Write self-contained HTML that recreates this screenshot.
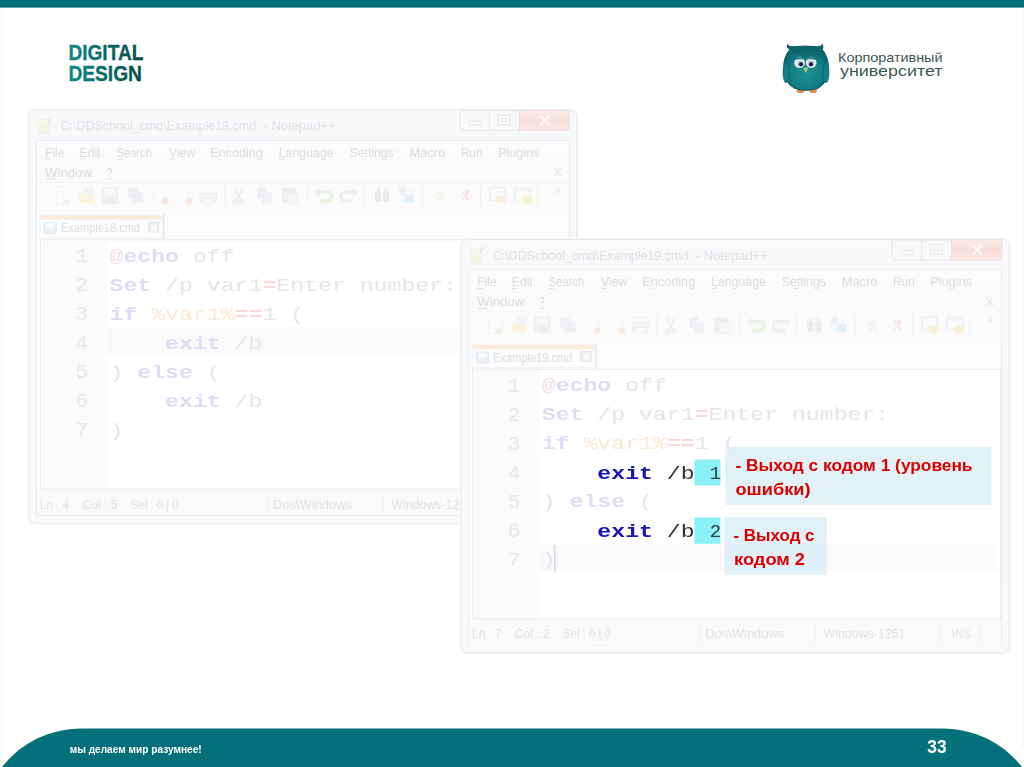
<!DOCTYPE html>
<html lang="ru"><head><meta charset="utf-8"><title>Slide 33</title>
<style>
html,body{margin:0;padding:0;background:#fff;}
body{width:1024px;height:767px;position:relative;overflow:hidden;font-family:"Liberation Sans",sans-serif;}
</style></head><body>
<svg width="1024" height="767" viewBox="0 0 1024 767" style="position:absolute;left:0;top:0">
<defs>
<linearGradient id="frameA" x1="0" y1="0" x2="0" y2="1"><stop offset="0" stop-color="#f5f8fb"/><stop offset="1" stop-color="#f7f9fc"/></linearGradient>
<linearGradient id="frameB" x1="0" y1="0" x2="0" y2="1"><stop offset="0" stop-color="#f5f8fb"/><stop offset="1" stop-color="#f7f9fc"/></linearGradient>
<linearGradient id="menug" x1="0" y1="0" x2="0" y2="1"><stop offset="0" stop-color="#fcfdfe"/><stop offset="0.5" stop-color="#f7f9fb"/><stop offset="1" stop-color="#f8fafc"/></linearGradient>
<linearGradient id="closeg" x1="0" y1="0" x2="0" y2="1"><stop offset="0" stop-color="#f9e8e5"/><stop offset="0.5" stop-color="#f5d8d3"/><stop offset="1" stop-color="#f8e2dd"/></linearGradient>
<linearGradient id="ddg" x1="0" y1="0" x2="1" y2="0"><stop offset="0" stop-color="#0a8a88"/><stop offset="1" stop-color="#084a48"/></linearGradient>
<filter id="soft" x="-2%" y="-2%" width="104%" height="104%"><feGaussianBlur stdDeviation="0.45"/></filter>
<radialGradient id="owlg" cx="0.5" cy="0.6" r="0.6"><stop offset="0" stop-color="#1b908f"/><stop offset="0.55" stop-color="#138088"/><stop offset="1" stop-color="#0b5f68"/></radialGradient>
</defs>
<rect x="0" y="0" width="1024" height="7.6" fill="#046f76"/>
<line x1="1.5" y1="8" x2="1.5" y2="767" stroke="#f6f6f6" stroke-width="1"/>
<rect x="1021.5" y="8" width="2.5" height="740" fill="#f9f9f9"/>
<text x="68.40" y="60.30" font-family="Liberation Sans, sans-serif" font-size="22.60" fill="url(#ddg)" textLength="75.00" lengthAdjust="spacingAndGlyphs" font-weight="bold" stroke="url(#ddg)" stroke-width="0.35">DIGITAL</text>
<text x="68.40" y="80.80" font-family="Liberation Sans, sans-serif" font-size="22.20" fill="url(#ddg)" textLength="73.50" lengthAdjust="spacingAndGlyphs" font-weight="bold" stroke="url(#ddg)" stroke-width="0.35">DESIGN</text>
<g transform="translate(0,0.8)">
<ellipse cx="800.5" cy="89.6" rx="3.8" ry="2.6" fill="#e58a45"/><ellipse cx="813.2" cy="89.600" rx="3.8" ry="2.6" fill="#e58a45"/>
<path d="M787.5 43.6 Q789 46.2 792.5 46 Q805 44.6 817.5 46 Q821 46.2 822.3 43.6 Q823.6 46.800 822.3 48.6 Q829.2 57 828.3 70 Q827.5 82 818 87.500 Q806 91.500 794.500 87.500 Q784.500 82 783.700 70 Q782.800 57 789.700 48.6 Q786.400 46.800 787.5 43.6 Z" fill="url(#owlg)" stroke="#0b5660" stroke-width="1"/>
<path d="M789.5 48.5 Q805 43.500 822.5 48.5 Q818 54 806 57 Q794 54 789.5 48.5Z" fill="#0d646b" fill-opacity="0.75"/>
<ellipse cx="786" cy="72" rx="3" ry="10" fill="#128084" stroke="#0c6068" stroke-width="0.6"/>
<ellipse cx="826" cy="72" rx="3" ry="10" fill="#128084" stroke="#0c6068" stroke-width="0.6"/>
<circle cx="799.6" cy="62" r="5.3" fill="#e9edf4"/><circle cx="811.2" cy="62" r="5.3" fill="#e9edf4"/>
<circle cx="800.6" cy="63" r="3.2" fill="#b9c3dc"/><circle cx="811" cy="63" r="3.2" fill="#b9c3dc"/>
<circle cx="801" cy="63.4" r="2" fill="#15153a"/><circle cx="811" cy="63.4" r="2" fill="#15153a"/>
<path d="M793.8 59.800 Q799 54.300 805.300 59.500 Q799 56.600 793.8 59.800Z" fill="#0e666c"/>
<path d="M817 59.800 Q811.800 54.300 805.5 59.500 Q811.800 56.600 817 59.800Z" fill="#0e666c"/>
<path d="M803.3 67.300 Q805.800 66 808.300 67.300 L805.800 72.5z" fill="#a9cf6a"/>
</g>
<text x="838.00" y="62.30" font-family="Liberation Sans, sans-serif" font-size="12.40" fill="#3a5654" textLength="104.50" lengthAdjust="spacingAndGlyphs" >Корпоративный</text>
<text x="840.00" y="76.00" font-family="Liberation Sans, sans-serif" font-size="14.60" fill="#3a5654" textLength="102.50" lengthAdjust="spacingAndGlyphs" >университет</text>
<g filter="url(#soft)" opacity="0.8">
<g transform="translate(0.00,0.00)">
<rect x="28.5" y="109" width="549" height="415" rx="7" fill="none" stroke="#f4f5f6" stroke-width="1.5"/>
<rect x="29.5" y="110" width="547" height="413" rx="6" fill="url(#frameA)" stroke="#e1e5e9" stroke-width="1"/>
<rect x="30.5" y="111" width="545" height="411" rx="5" fill="none" stroke="#fbfcfd" stroke-width="1"/>
<rect x="36.5" y="140.5" width="533" height="375" fill="#ffffff" stroke="#e3e7eb" stroke-width="1"/>
<g><rect x="38" y="119.5" width="11.5" height="14" fill="#f6f6e8" stroke="#e9e9e0" stroke-width="0.8"/><rect x="39.5" y="126" width="8.5" height="6.5" fill="#f0f4d8"/><path d="M47 123 L51.3 116.8 L52.300 117.800 L48 124 Z" fill="#e6e3d6"/></g>
<text x="60.60" y="130.40" font-family="Liberation Sans, sans-serif" font-size="13.20" fill="#d7dadd" textLength="195.50" lengthAdjust="spacingAndGlyphs" >C:\DDSchool_cmd\Example18.cmd</text>
<text x="263.50" y="130.40" font-family="Liberation Sans, sans-serif" font-size="13.20" fill="#d7dadd" textLength="72.00" lengthAdjust="spacingAndGlyphs" >- Notepad++</text>
<path d="M460 110.5 H569.5 V126 Q569.5 130.5 565 130.5 H464.5 Q460 130.5 460 126 Z" fill="#f6f8fa" stroke="#dfe3e7" stroke-width="1"/>
<path d="M519.5 110.5 H569.5 V126 Q569.5 130.5 565 130.5 H519.5 Z" fill="url(#closeg)" stroke="#ecd6d3" stroke-width="1"/>
<line x1="489.5" y1="110.5" x2="489.5" y2="130.5" stroke="#e1e5e9"/>
<rect x="469" y="121" width="12" height="4" rx="1" fill="#fdfdfd" stroke="#dcdfe3" stroke-width="1"/>
<rect x="498.5" y="115.5" width="11" height="9" fill="#fdfdfd" stroke="#dcdfe3" stroke-width="1"/><rect x="501.5" y="118.500" width="5" height="3" fill="none" stroke="#dcdfe3" stroke-width="1"/>
<path d="M540.5 116 L549.5 125 M549.5 116 L540.5 125" stroke="#fdf8f7" stroke-width="2.2" stroke-linecap="round"/>
<rect x="37" y="141" width="532" height="41" fill="url(#menug)"/>
<line x1="37" y1="182.5" x2="569" y2="182.5" stroke="#eef0f3"/>
<text x="45.00" y="156.70" font-family="Liberation Sans, sans-serif" font-size="12.60" fill="#d1d4d7" textLength="19.50" lengthAdjust="spacingAndGlyphs" >File</text>
<line x1="45.00" y1="158.9" x2="51.00" y2="158.9" stroke="#d6d9dc" stroke-width="1"/>
<text x="79.50" y="156.70" font-family="Liberation Sans, sans-serif" font-size="12.60" fill="#d1d4d7" textLength="21.00" lengthAdjust="spacingAndGlyphs" >Edit</text>
<line x1="79.50" y1="158.9" x2="85.50" y2="158.9" stroke="#d6d9dc" stroke-width="1"/>
<text x="116.25" y="156.70" font-family="Liberation Sans, sans-serif" font-size="12.60" fill="#d1d4d7" textLength="35.75" lengthAdjust="spacingAndGlyphs" >Search</text>
<line x1="116.25" y1="158.9" x2="122.25" y2="158.9" stroke="#d6d9dc" stroke-width="1"/>
<text x="168.75" y="156.70" font-family="Liberation Sans, sans-serif" font-size="12.60" fill="#d1d4d7" textLength="26.25" lengthAdjust="spacingAndGlyphs" >View</text>
<line x1="168.75" y1="158.9" x2="174.75" y2="158.9" stroke="#d6d9dc" stroke-width="1"/>
<text x="210.00" y="156.70" font-family="Liberation Sans, sans-serif" font-size="12.60" fill="#d1d4d7" textLength="53.00" lengthAdjust="spacingAndGlyphs" >Encoding</text>
<line x1="216.50" y1="158.9" x2="222.50" y2="158.9" stroke="#e6e8ea" stroke-width="1"/>
<text x="278.75" y="156.70" font-family="Liberation Sans, sans-serif" font-size="12.60" fill="#d1d4d7" textLength="55.00" lengthAdjust="spacingAndGlyphs" >Language</text>
<line x1="278.75" y1="158.9" x2="284.75" y2="158.9" stroke="#d6d9dc" stroke-width="1"/>
<text x="349.50" y="156.70" font-family="Liberation Sans, sans-serif" font-size="12.60" fill="#d1d4d7" textLength="44.25" lengthAdjust="spacingAndGlyphs" >Settings</text>
<line x1="362.00" y1="158.9" x2="366.00" y2="158.9" stroke="#d6d9dc" stroke-width="1"/>
<text x="409.50" y="156.70" font-family="Liberation Sans, sans-serif" font-size="12.60" fill="#d1d4d7" textLength="35.50" lengthAdjust="spacingAndGlyphs" >Macro</text>
<text x="460.75" y="156.70" font-family="Liberation Sans, sans-serif" font-size="12.60" fill="#d1d4d7" textLength="21.75" lengthAdjust="spacingAndGlyphs" >Run</text>
<text x="498.00" y="156.70" font-family="Liberation Sans, sans-serif" font-size="12.60" fill="#d1d4d7" textLength="41.50" lengthAdjust="spacingAndGlyphs" >Plugins</text>
<text x="45.00" y="176.80" font-family="Liberation Sans, sans-serif" font-size="12.60" fill="#d1d4d7" textLength="47.00" lengthAdjust="spacingAndGlyphs" >Window</text>
<line x1="45.00" y1="179" x2="56.00" y2="179" stroke="#d6dade" stroke-width="1"/>
<text x="107.00" y="176.80" font-family="Liberation Sans, sans-serif" font-size="12.60" fill="#d1d4d7" textLength="5.50" lengthAdjust="spacingAndGlyphs" >?</text>
<line x1="107.00" y1="179" x2="112.50" y2="179" stroke="#d6dade" stroke-width="1"/>
<text x="553.50" y="176.30" font-family="Liberation Sans, sans-serif" font-size="11.50" fill="#d9dde1" textLength="8.00" lengthAdjust="spacingAndGlyphs" >X</text>
<rect x="37" y="183" width="532" height="29" fill="#fafbfc"/>
<g opacity="0.72"><path d="M56 187 h9 l4 4 v13 h-13z" fill="#fdfdfd" stroke="#eceef0"/><circle cx="66" cy="202" r="3" fill="#e4efd6"/>
<path d="M79 193 h6 l2 -2 h7 v12 h-15z" fill="#fbf0c8"/><path d="M84 188 h9 v6 h-9z" fill="#eef2f8" stroke="#e4e9f1"/>
<rect x="102.5" y="187.500" width="15.5" height="16" rx="1" fill="#e9ecf1" stroke="#e2e5ea"/><rect x="105" y="188" width="10" height="6" fill="#f8f9fb"/><rect x="105.5" y="197" width="9" height="6" fill="#dfe2e8"/>
<rect x="128" y="188" width="10" height="10" fill="#e6e9ee"/><rect x="132" y="192" width="11" height="11" fill="#e4e7ec" stroke="#eef0f3"/>
<path d="M154 187.500 h8 l4 4 v12 h-12z" fill="#fcfcfc" stroke="#eeeff1"/><circle cx="165" cy="201" r="3.3" fill="#f8dcc8"/>
<path d="M179 187.500 h7 l3 3 v10 h-10z" fill="#fcfcfc" stroke="#eeeff1"/><circle cx="189.5" cy="201" r="3.300" fill="#f8dcc8"/>
<rect x="203" y="188" width="10" height="6" fill="#fcfcfc" stroke="#e6e8ec"/><rect x="200" y="193.500" width="16.5" height="8" rx="1.500" fill="#eef0f3" stroke="#e3e6ea"/><rect x="203" y="198" width="10.5" height="5.500" fill="#fafafa" stroke="#e6e8ec"/>
<line x1="225.0" y1="186" x2="225.0" y2="205" stroke="#e9ebee" stroke-width="1.2"/>
<line x1="307.0" y1="186" x2="307.0" y2="205" stroke="#e9ebee" stroke-width="1.2"/>
<line x1="364.5" y1="186" x2="364.5" y2="205" stroke="#e9ebee" stroke-width="1.2"/>
<line x1="422.5" y1="186" x2="422.5" y2="205" stroke="#e9ebee" stroke-width="1.2"/>
<line x1="480.5" y1="186" x2="480.5" y2="205" stroke="#e9ebee" stroke-width="1.2"/>
<line x1="537.7" y1="186" x2="537.7" y2="205" stroke="#e9ebee" stroke-width="1.2"/>
<path d="M234 188 L241 201 M243 188 L236 201" stroke="#e3e5e9" stroke-width="2" fill="none"/><circle cx="235.5" cy="202" r="2.200" fill="none" stroke="#dfe5f0" stroke-width="1.5"/><circle cx="242" cy="202" r="2.200" fill="none" stroke="#dfe5f0" stroke-width="1.5"/>
<rect x="257" y="187.500" width="9" height="11" fill="#e6e9ee"/><rect x="262" y="192" width="10" height="11.5" fill="#e8ebf0" stroke="#f2f3f5"/>
<rect x="282" y="188" width="14" height="15" rx="1" fill="#e9e6de"/><rect x="288" y="193" width="10" height="11" fill="#f3f4f6" stroke="#e6e8ec"/>
<path d="M318 192 h9 q5 0 5 4.5 t-5 4.5 h-7" fill="none" stroke="#dbecd2" stroke-width="3.5"/><path d="M320 188 l-5.500 4.500 l5.500 4.500z" fill="#dbecd2"/>
<path d="M355 192 h-9 q-5 0 -5 4.5 t5 4.5 h7" fill="none" stroke="#e6e8ec" stroke-width="3.5"/><path d="M353 188 l5.500 4.500 l-5.500 4.500z" fill="#e6e8ec"/>
<rect x="375" y="192" width="6" height="10" rx="1" fill="#dcdee2"/><rect x="383" y="192" width="6" height="10" rx="1" fill="#dcdee2"/><rect x="377" y="188.500" width="3" height="4" fill="#e3e5e8"/><rect x="384.500" y="188.500" width="3" height="4" fill="#e3e5e8"/><rect x="380" y="194" width="4" height="3" fill="#e3e5e8"/>
<rect x="399" y="187.500" width="7" height="8" fill="#dfeaf6"/><rect x="405" y="194.500" width="9" height="8.500" fill="#d6e6f5"/><path d="M401 198 l3 3 M409 190 l3 3" stroke="#d9e8f5" stroke-width="1.500"/>
<path d="M436 192 l6 5 l-5 4" stroke="#e1efd8" stroke-width="2" fill="none"/><circle cx="442" cy="193" r="2" fill="#e4f0dc"/><circle cx="443" cy="200" r="2" fill="#e8f2e0"/><line x1="431" y1="196" x2="438" y2="196" stroke="#ececec"/>
<path d="M461 191 l6 5 l-5 4" stroke="#f7dada" stroke-width="2" fill="none"/><circle cx="467" cy="192" r="2.200" fill="#f6d2d2"/><circle cx="468" cy="199" r="2" fill="#f8dede"/><line x1="456" y1="196" x2="463" y2="196" stroke="#ececec"/>
<rect x="490" y="187.500" width="15" height="13" fill="#fbfbfc" stroke="#e3e6eb" stroke-width="1.300"/><rect x="497" y="196" width="9" height="7.500" rx="1" fill="#fbeac0"/>
<rect x="514.500" y="188" width="16" height="12" fill="#fbfbfc" stroke="#e3e6eb" stroke-width="1.300"/><rect x="515" y="188" width="15" height="3" fill="#eceff3"/><rect x="522" y="196" width="10" height="7.500" rx="1" fill="#fbeac0"/>
</g>
<text x="555.00" y="193.50" font-family="Liberation Sans, sans-serif" font-size="11.00" fill="#dde1e6" >»</text>
<rect x="37" y="212" width="532" height="27.5" fill="#fcfcfc"/>
<rect x="40" y="215.2" width="122" height="4.2" fill="#fde7d4"/>
<rect x="40" y="219.4" width="123" height="18.500" fill="#fdfdfd" stroke="#efefef" stroke-width="1"/>
<line x1="163.7" y1="214" x2="163.700" y2="239" stroke="#e0e0e0" stroke-width="1.3"/>
<rect x="44" y="222.5" width="12.5" height="11" rx="1" fill="#e6f0f9" stroke="#dbe7f3"/><rect x="46" y="223.5" width="8.5" height="4" fill="#fbfdff"/>
<text x="61.00" y="232.00" font-family="Liberation Sans, sans-serif" font-size="12.50" fill="#d6d6d6" textLength="79.00" lengthAdjust="spacingAndGlyphs" >Example18.cmd</text>
<rect x="148.5" y="222" width="10.5" height="10" fill="#e9e9e9" stroke="#e3e3e3"/><path d="M151 225 L156.5 230.500 M156.5 225 L151 230.500" stroke="#fff" stroke-width="1.6"/>
<rect x="40.5" y="239.75" width="528" height="249.5" fill="#ffffff" stroke="#e6e8ea" stroke-width="1.2"/>
<rect x="42" y="241" width="63" height="247.5" fill="#fafafa"/>
<rect x="103" y="241" width="4.5" height="247.5" fill="#fcfcfc"/>
<rect x="107.5" y="326.90" width="457" height="27.5" fill="#f9f9fd"/>
<text x="75.30" y="262.20" font-family="Liberation Mono, monospace" font-size="20.80" fill="#e3e3e3" textLength="13.00" lengthAdjust="spacingAndGlyphs" >1</text>
<text x="75.30" y="291.20" font-family="Liberation Mono, monospace" font-size="20.80" fill="#e3e3e3" textLength="13.00" lengthAdjust="spacingAndGlyphs" >2</text>
<text x="75.30" y="320.20" font-family="Liberation Mono, monospace" font-size="20.80" fill="#e3e3e3" textLength="13.00" lengthAdjust="spacingAndGlyphs" >3</text>
<text x="75.30" y="349.20" font-family="Liberation Mono, monospace" font-size="20.80" fill="#e3e3e3" textLength="13.00" lengthAdjust="spacingAndGlyphs" >4</text>
<text x="75.30" y="378.20" font-family="Liberation Mono, monospace" font-size="20.80" fill="#e3e3e3" textLength="13.00" lengthAdjust="spacingAndGlyphs" >5</text>
<text x="75.30" y="407.20" font-family="Liberation Mono, monospace" font-size="20.80" fill="#e3e3e3" textLength="13.00" lengthAdjust="spacingAndGlyphs" >6</text>
<text x="75.30" y="436.20" font-family="Liberation Mono, monospace" font-size="20.80" fill="#e3e3e3" textLength="13.00" lengthAdjust="spacingAndGlyphs" >7</text>
</g>
<text x="109.50" y="261.90" font-family="Liberation Mono, monospace" font-size="18.60" fill="#f3d7e5" textLength="13.90" lengthAdjust="spacingAndGlyphs" >@</text>
<text x="123.40" y="261.90" font-family="Liberation Mono, monospace" font-size="18.60" fill="#d5d6f2" textLength="55.60" lengthAdjust="spacingAndGlyphs" font-weight="bold" >echo</text>
<text x="192.90" y="261.90" font-family="Liberation Mono, monospace" font-size="18.60" fill="#e0e0e0" textLength="41.70" lengthAdjust="spacingAndGlyphs" >off</text>
<text x="109.50" y="290.90" font-family="Liberation Mono, monospace" font-size="18.60" fill="#d5d6f2" textLength="41.70" lengthAdjust="spacingAndGlyphs" font-weight="bold" >Set</text>
<text x="165.10" y="290.90" font-family="Liberation Mono, monospace" font-size="18.60" fill="#e0e0e0" textLength="97.30" lengthAdjust="spacingAndGlyphs" >/p var1</text>
<text x="262.40" y="290.90" font-family="Liberation Mono, monospace" font-size="18.60" fill="#f9cfcf" textLength="13.90" lengthAdjust="spacingAndGlyphs" font-weight="bold" >=</text>
<text x="276.30" y="290.90" font-family="Liberation Mono, monospace" font-size="18.60" fill="#e0e0e0" textLength="180.70" lengthAdjust="spacingAndGlyphs" >Enter number:</text>
<text x="109.50" y="319.90" font-family="Liberation Mono, monospace" font-size="18.60" fill="#d5d6f2" textLength="27.80" lengthAdjust="spacingAndGlyphs" font-weight="bold" >if</text>
<text x="151.20" y="319.90" font-family="Liberation Mono, monospace" font-size="18.60" fill="#fae4cd" textLength="83.40" lengthAdjust="spacingAndGlyphs" >%var1%</text>
<text x="234.60" y="319.90" font-family="Liberation Mono, monospace" font-size="18.60" fill="#f9cfcf" textLength="27.80" lengthAdjust="spacingAndGlyphs" font-weight="bold" >==</text>
<text x="262.40" y="319.90" font-family="Liberation Mono, monospace" font-size="18.60" fill="#e0e0e0" textLength="13.90" lengthAdjust="spacingAndGlyphs" >1</text>
<text x="290.20" y="319.90" font-family="Liberation Mono, monospace" font-size="18.60" fill="#dcdff6" textLength="13.90" lengthAdjust="spacingAndGlyphs" >(</text>
<text x="165.10" y="348.90" font-family="Liberation Mono, monospace" font-size="18.60" fill="#d5d6f2" textLength="55.60" lengthAdjust="spacingAndGlyphs" font-weight="bold" >exit</text>
<text x="234.60" y="348.90" font-family="Liberation Mono, monospace" font-size="18.60" fill="#e0e0e0" textLength="27.80" lengthAdjust="spacingAndGlyphs" >/b</text>
<text x="109.50" y="377.90" font-family="Liberation Mono, monospace" font-size="18.60" fill="#dcdff6" textLength="13.90" lengthAdjust="spacingAndGlyphs" >)</text>
<text x="137.30" y="377.90" font-family="Liberation Mono, monospace" font-size="18.60" fill="#d5d6f2" textLength="55.60" lengthAdjust="spacingAndGlyphs" font-weight="bold" >else</text>
<text x="206.80" y="377.90" font-family="Liberation Mono, monospace" font-size="18.60" fill="#dcdff6" textLength="13.90" lengthAdjust="spacingAndGlyphs" >(</text>
<text x="165.10" y="406.90" font-family="Liberation Mono, monospace" font-size="18.60" fill="#d5d6f2" textLength="55.60" lengthAdjust="spacingAndGlyphs" font-weight="bold" >exit</text>
<text x="234.60" y="406.90" font-family="Liberation Mono, monospace" font-size="18.60" fill="#e0e0e0" textLength="27.80" lengthAdjust="spacingAndGlyphs" >/b</text>
<text x="109.50" y="435.90" font-family="Liberation Mono, monospace" font-size="18.60" fill="#dcdff6" textLength="13.90" lengthAdjust="spacingAndGlyphs" >)</text>
<g transform="translate(0.00,0.00)">
<rect x="37" y="490" width="532" height="25" fill="#f9f9fa"/>
<line x1="267.5" y1="492" x2="267.5" y2="514" stroke="#f0f0f1"/>
<line x1="383.5" y1="492" x2="383.5" y2="514" stroke="#f0f0f1"/>
<line x1="508.0" y1="492" x2="508.0" y2="514" stroke="#f0f0f1"/>
<line x1="548.0" y1="492" x2="548.0" y2="514" stroke="#f0f0f1"/>
<text x="40.00" y="508.70" font-family="Liberation Sans, sans-serif" font-size="12.60" fill="#dadbdc" textLength="29.00" lengthAdjust="spacingAndGlyphs" >Ln : 4</text>
<text x="82.50" y="508.70" font-family="Liberation Sans, sans-serif" font-size="12.60" fill="#dadbdc" textLength="35.00" lengthAdjust="spacingAndGlyphs" >Col : 5</text>
<text x="130.70" y="508.70" font-family="Liberation Sans, sans-serif" font-size="12.60" fill="#dadbdc" textLength="48.00" lengthAdjust="spacingAndGlyphs" >Sel : 0 | 0</text>
<text x="273.00" y="508.70" font-family="Liberation Sans, sans-serif" font-size="12.60" fill="#dadbdc" textLength="79.00" lengthAdjust="spacingAndGlyphs" >Dos\Windows</text>
<text x="391.25" y="508.70" font-family="Liberation Sans, sans-serif" font-size="12.60" fill="#dadbdc" textLength="82.00" lengthAdjust="spacingAndGlyphs" >Windows-1251</text>
<text x="519.50" y="508.70" font-family="Liberation Sans, sans-serif" font-size="12.60" fill="#dedfe0" textLength="19.00" lengthAdjust="spacingAndGlyphs" >INS</text>
</g>
<g transform="translate(432.25,129.50)">
<rect x="28.5" y="109" width="549" height="415" rx="7" fill="none" stroke="#f4f5f6" stroke-width="1.5"/>
<rect x="29.5" y="110" width="547" height="413" rx="6" fill="url(#frameB)" stroke="#e1e5e9" stroke-width="1"/>
<rect x="30.5" y="111" width="545" height="411" rx="5" fill="none" stroke="#fbfcfd" stroke-width="1"/>
<rect x="36.5" y="140.5" width="533" height="375" fill="#ffffff" stroke="#e3e7eb" stroke-width="1"/>
<g><rect x="38" y="119.5" width="11.5" height="14" fill="#f6f6e8" stroke="#e9e9e0" stroke-width="0.8"/><rect x="39.5" y="126" width="8.5" height="6.5" fill="#f0f4d8"/><path d="M47 123 L51.3 116.8 L52.300 117.800 L48 124 Z" fill="#e6e3d6"/></g>
<text x="60.60" y="130.40" font-family="Liberation Sans, sans-serif" font-size="13.20" fill="#d7dadd" textLength="195.50" lengthAdjust="spacingAndGlyphs" >C:\DDSchool_cmd\Example19.cmd</text>
<text x="263.50" y="130.40" font-family="Liberation Sans, sans-serif" font-size="13.20" fill="#d7dadd" textLength="72.00" lengthAdjust="spacingAndGlyphs" >- Notepad++</text>
<path d="M460 110.5 H569.5 V126 Q569.5 130.5 565 130.5 H464.5 Q460 130.5 460 126 Z" fill="#f6f8fa" stroke="#dfe3e7" stroke-width="1"/>
<path d="M519.5 110.5 H569.5 V126 Q569.5 130.5 565 130.5 H519.5 Z" fill="url(#closeg)" stroke="#ecd6d3" stroke-width="1"/>
<line x1="489.5" y1="110.5" x2="489.5" y2="130.5" stroke="#e1e5e9"/>
<rect x="469" y="121" width="12" height="4" rx="1" fill="#fdfdfd" stroke="#dcdfe3" stroke-width="1"/>
<rect x="498.5" y="115.5" width="11" height="9" fill="#fdfdfd" stroke="#dcdfe3" stroke-width="1"/><rect x="501.5" y="118.500" width="5" height="3" fill="none" stroke="#dcdfe3" stroke-width="1"/>
<path d="M540.5 116 L549.5 125 M549.5 116 L540.5 125" stroke="#fdf8f7" stroke-width="2.2" stroke-linecap="round"/>
<rect x="37" y="141" width="532" height="41" fill="url(#menug)"/>
<line x1="37" y1="182.5" x2="569" y2="182.5" stroke="#eef0f3"/>
<text x="45.00" y="156.70" font-family="Liberation Sans, sans-serif" font-size="12.60" fill="#d1d4d7" textLength="19.50" lengthAdjust="spacingAndGlyphs" >File</text>
<line x1="45.00" y1="158.9" x2="51.00" y2="158.9" stroke="#d6d9dc" stroke-width="1"/>
<text x="79.50" y="156.70" font-family="Liberation Sans, sans-serif" font-size="12.60" fill="#d1d4d7" textLength="21.00" lengthAdjust="spacingAndGlyphs" >Edit</text>
<line x1="79.50" y1="158.9" x2="85.50" y2="158.9" stroke="#d6d9dc" stroke-width="1"/>
<text x="116.25" y="156.70" font-family="Liberation Sans, sans-serif" font-size="12.60" fill="#d1d4d7" textLength="35.75" lengthAdjust="spacingAndGlyphs" >Search</text>
<line x1="116.25" y1="158.9" x2="122.25" y2="158.9" stroke="#d6d9dc" stroke-width="1"/>
<text x="168.75" y="156.70" font-family="Liberation Sans, sans-serif" font-size="12.60" fill="#d1d4d7" textLength="26.25" lengthAdjust="spacingAndGlyphs" >View</text>
<line x1="168.75" y1="158.9" x2="174.75" y2="158.9" stroke="#d6d9dc" stroke-width="1"/>
<text x="210.00" y="156.70" font-family="Liberation Sans, sans-serif" font-size="12.60" fill="#d1d4d7" textLength="53.00" lengthAdjust="spacingAndGlyphs" >Encoding</text>
<line x1="216.50" y1="158.9" x2="222.50" y2="158.9" stroke="#e6e8ea" stroke-width="1"/>
<text x="278.75" y="156.70" font-family="Liberation Sans, sans-serif" font-size="12.60" fill="#d1d4d7" textLength="55.00" lengthAdjust="spacingAndGlyphs" >Language</text>
<line x1="278.75" y1="158.9" x2="284.75" y2="158.9" stroke="#d6d9dc" stroke-width="1"/>
<text x="349.50" y="156.70" font-family="Liberation Sans, sans-serif" font-size="12.60" fill="#d1d4d7" textLength="44.25" lengthAdjust="spacingAndGlyphs" >Settings</text>
<line x1="362.00" y1="158.9" x2="366.00" y2="158.9" stroke="#d6d9dc" stroke-width="1"/>
<text x="409.50" y="156.70" font-family="Liberation Sans, sans-serif" font-size="12.60" fill="#d1d4d7" textLength="35.50" lengthAdjust="spacingAndGlyphs" >Macro</text>
<text x="460.75" y="156.70" font-family="Liberation Sans, sans-serif" font-size="12.60" fill="#d1d4d7" textLength="21.75" lengthAdjust="spacingAndGlyphs" >Run</text>
<text x="498.00" y="156.70" font-family="Liberation Sans, sans-serif" font-size="12.60" fill="#d1d4d7" textLength="41.50" lengthAdjust="spacingAndGlyphs" >Plugins</text>
<text x="45.00" y="176.80" font-family="Liberation Sans, sans-serif" font-size="12.60" fill="#d1d4d7" textLength="47.00" lengthAdjust="spacingAndGlyphs" >Window</text>
<line x1="45.00" y1="179" x2="56.00" y2="179" stroke="#d6dade" stroke-width="1"/>
<text x="107.00" y="176.80" font-family="Liberation Sans, sans-serif" font-size="12.60" fill="#d1d4d7" textLength="5.50" lengthAdjust="spacingAndGlyphs" >?</text>
<line x1="107.00" y1="179" x2="112.50" y2="179" stroke="#d6dade" stroke-width="1"/>
<text x="553.50" y="176.30" font-family="Liberation Sans, sans-serif" font-size="11.50" fill="#d9dde1" textLength="8.00" lengthAdjust="spacingAndGlyphs" >X</text>
<rect x="37" y="183" width="532" height="29" fill="#fafbfc"/>
<g opacity="0.72"><path d="M56 187 h9 l4 4 v13 h-13z" fill="#fdfdfd" stroke="#eceef0"/><circle cx="66" cy="202" r="3" fill="#e4efd6"/>
<path d="M79 193 h6 l2 -2 h7 v12 h-15z" fill="#fbf0c8"/><path d="M84 188 h9 v6 h-9z" fill="#eef2f8" stroke="#e4e9f1"/>
<rect x="102.5" y="187.500" width="15.5" height="16" rx="1" fill="#e9ecf1" stroke="#e2e5ea"/><rect x="105" y="188" width="10" height="6" fill="#f8f9fb"/><rect x="105.5" y="197" width="9" height="6" fill="#dfe2e8"/>
<rect x="128" y="188" width="10" height="10" fill="#e6e9ee"/><rect x="132" y="192" width="11" height="11" fill="#e4e7ec" stroke="#eef0f3"/>
<path d="M154 187.500 h8 l4 4 v12 h-12z" fill="#fcfcfc" stroke="#eeeff1"/><circle cx="165" cy="201" r="3.3" fill="#f8dcc8"/>
<path d="M179 187.500 h7 l3 3 v10 h-10z" fill="#fcfcfc" stroke="#eeeff1"/><circle cx="189.5" cy="201" r="3.300" fill="#f8dcc8"/>
<rect x="203" y="188" width="10" height="6" fill="#fcfcfc" stroke="#e6e8ec"/><rect x="200" y="193.500" width="16.5" height="8" rx="1.500" fill="#eef0f3" stroke="#e3e6ea"/><rect x="203" y="198" width="10.5" height="5.500" fill="#fafafa" stroke="#e6e8ec"/>
<line x1="225.0" y1="186" x2="225.0" y2="205" stroke="#e9ebee" stroke-width="1.2"/>
<line x1="307.0" y1="186" x2="307.0" y2="205" stroke="#e9ebee" stroke-width="1.2"/>
<line x1="364.5" y1="186" x2="364.5" y2="205" stroke="#e9ebee" stroke-width="1.2"/>
<line x1="422.5" y1="186" x2="422.5" y2="205" stroke="#e9ebee" stroke-width="1.2"/>
<line x1="480.5" y1="186" x2="480.5" y2="205" stroke="#e9ebee" stroke-width="1.2"/>
<line x1="537.7" y1="186" x2="537.7" y2="205" stroke="#e9ebee" stroke-width="1.2"/>
<path d="M234 188 L241 201 M243 188 L236 201" stroke="#e3e5e9" stroke-width="2" fill="none"/><circle cx="235.5" cy="202" r="2.200" fill="none" stroke="#dfe5f0" stroke-width="1.5"/><circle cx="242" cy="202" r="2.200" fill="none" stroke="#dfe5f0" stroke-width="1.5"/>
<rect x="257" y="187.500" width="9" height="11" fill="#e6e9ee"/><rect x="262" y="192" width="10" height="11.5" fill="#e8ebf0" stroke="#f2f3f5"/>
<rect x="282" y="188" width="14" height="15" rx="1" fill="#e9e6de"/><rect x="288" y="193" width="10" height="11" fill="#f3f4f6" stroke="#e6e8ec"/>
<path d="M318 192 h9 q5 0 5 4.5 t-5 4.5 h-7" fill="none" stroke="#dbecd2" stroke-width="3.5"/><path d="M320 188 l-5.500 4.500 l5.500 4.500z" fill="#dbecd2"/>
<path d="M355 192 h-9 q-5 0 -5 4.5 t5 4.5 h7" fill="none" stroke="#e6e8ec" stroke-width="3.5"/><path d="M353 188 l5.500 4.500 l-5.500 4.500z" fill="#e6e8ec"/>
<rect x="375" y="192" width="6" height="10" rx="1" fill="#dcdee2"/><rect x="383" y="192" width="6" height="10" rx="1" fill="#dcdee2"/><rect x="377" y="188.500" width="3" height="4" fill="#e3e5e8"/><rect x="384.500" y="188.500" width="3" height="4" fill="#e3e5e8"/><rect x="380" y="194" width="4" height="3" fill="#e3e5e8"/>
<rect x="399" y="187.500" width="7" height="8" fill="#dfeaf6"/><rect x="405" y="194.500" width="9" height="8.500" fill="#d6e6f5"/><path d="M401 198 l3 3 M409 190 l3 3" stroke="#d9e8f5" stroke-width="1.500"/>
<path d="M436 192 l6 5 l-5 4" stroke="#e1efd8" stroke-width="2" fill="none"/><circle cx="442" cy="193" r="2" fill="#e4f0dc"/><circle cx="443" cy="200" r="2" fill="#e8f2e0"/><line x1="431" y1="196" x2="438" y2="196" stroke="#ececec"/>
<path d="M461 191 l6 5 l-5 4" stroke="#f7dada" stroke-width="2" fill="none"/><circle cx="467" cy="192" r="2.200" fill="#f6d2d2"/><circle cx="468" cy="199" r="2" fill="#f8dede"/><line x1="456" y1="196" x2="463" y2="196" stroke="#ececec"/>
<rect x="490" y="187.500" width="15" height="13" fill="#fbfbfc" stroke="#e3e6eb" stroke-width="1.300"/><rect x="497" y="196" width="9" height="7.500" rx="1" fill="#fbeac0"/>
<rect x="514.500" y="188" width="16" height="12" fill="#fbfbfc" stroke="#e3e6eb" stroke-width="1.300"/><rect x="515" y="188" width="15" height="3" fill="#eceff3"/><rect x="522" y="196" width="10" height="7.500" rx="1" fill="#fbeac0"/>
</g>
<text x="555.00" y="193.50" font-family="Liberation Sans, sans-serif" font-size="11.00" fill="#dde1e6" >»</text>
<rect x="37" y="212" width="532" height="27.5" fill="#fcfcfc"/>
<rect x="40" y="215.2" width="122" height="4.2" fill="#fde7d4"/>
<rect x="40" y="219.4" width="123" height="18.500" fill="#fdfdfd" stroke="#efefef" stroke-width="1"/>
<line x1="163.7" y1="214" x2="163.700" y2="239" stroke="#e0e0e0" stroke-width="1.3"/>
<rect x="44" y="222.5" width="12.5" height="11" rx="1" fill="#e6f0f9" stroke="#dbe7f3"/><rect x="46" y="223.5" width="8.5" height="4" fill="#fbfdff"/>
<text x="61.00" y="232.00" font-family="Liberation Sans, sans-serif" font-size="12.50" fill="#d6d6d6" textLength="79.00" lengthAdjust="spacingAndGlyphs" >Example19.cmd</text>
<rect x="148.5" y="222" width="10.5" height="10" fill="#e9e9e9" stroke="#e3e3e3"/><path d="M151 225 L156.5 230.500 M156.5 225 L151 230.500" stroke="#fff" stroke-width="1.6"/>
<rect x="40.5" y="239.75" width="528" height="249.5" fill="#ffffff" stroke="#e6e8ea" stroke-width="1.2"/>
<rect x="42" y="241" width="63" height="247.5" fill="#fafafa"/>
<rect x="103" y="241" width="4.5" height="247.5" fill="#fcfcfc"/>
<rect x="107.5" y="413.90" width="457" height="27.5" fill="#f9f9fd"/>
<text x="75.30" y="262.20" font-family="Liberation Mono, monospace" font-size="20.80" fill="#e3e3e3" textLength="13.00" lengthAdjust="spacingAndGlyphs" >1</text>
<text x="75.30" y="291.20" font-family="Liberation Mono, monospace" font-size="20.80" fill="#e3e3e3" textLength="13.00" lengthAdjust="spacingAndGlyphs" >2</text>
<text x="75.30" y="320.20" font-family="Liberation Mono, monospace" font-size="20.80" fill="#e3e3e3" textLength="13.00" lengthAdjust="spacingAndGlyphs" >3</text>
<text x="75.30" y="349.20" font-family="Liberation Mono, monospace" font-size="20.80" fill="#e3e3e3" textLength="13.00" lengthAdjust="spacingAndGlyphs" >4</text>
<text x="75.30" y="378.20" font-family="Liberation Mono, monospace" font-size="20.80" fill="#e3e3e3" textLength="13.00" lengthAdjust="spacingAndGlyphs" >5</text>
<text x="75.30" y="407.20" font-family="Liberation Mono, monospace" font-size="20.80" fill="#e3e3e3" textLength="13.00" lengthAdjust="spacingAndGlyphs" >6</text>
<text x="75.30" y="436.20" font-family="Liberation Mono, monospace" font-size="20.80" fill="#e3e3e3" textLength="13.00" lengthAdjust="spacingAndGlyphs" >7</text>
</g>
<text x="541.75" y="391.40" font-family="Liberation Mono, monospace" font-size="18.60" fill="#f3d7e5" textLength="13.90" lengthAdjust="spacingAndGlyphs" >@</text>
<text x="555.65" y="391.40" font-family="Liberation Mono, monospace" font-size="18.60" fill="#d5d6f2" textLength="55.60" lengthAdjust="spacingAndGlyphs" font-weight="bold" >echo</text>
<text x="625.15" y="391.40" font-family="Liberation Mono, monospace" font-size="18.60" fill="#e0e0e0" textLength="41.70" lengthAdjust="spacingAndGlyphs" >off</text>
<text x="541.75" y="420.40" font-family="Liberation Mono, monospace" font-size="18.60" fill="#d5d6f2" textLength="41.70" lengthAdjust="spacingAndGlyphs" font-weight="bold" >Set</text>
<text x="597.35" y="420.40" font-family="Liberation Mono, monospace" font-size="18.60" fill="#e0e0e0" textLength="97.30" lengthAdjust="spacingAndGlyphs" >/p var1</text>
<text x="694.65" y="420.40" font-family="Liberation Mono, monospace" font-size="18.60" fill="#f9cfcf" textLength="13.90" lengthAdjust="spacingAndGlyphs" font-weight="bold" >=</text>
<text x="708.55" y="420.40" font-family="Liberation Mono, monospace" font-size="18.60" fill="#e0e0e0" textLength="180.70" lengthAdjust="spacingAndGlyphs" >Enter number:</text>
<text x="541.75" y="449.40" font-family="Liberation Mono, monospace" font-size="18.60" fill="#d5d6f2" textLength="27.80" lengthAdjust="spacingAndGlyphs" font-weight="bold" >if</text>
<text x="583.45" y="449.40" font-family="Liberation Mono, monospace" font-size="18.60" fill="#fae4cd" textLength="83.40" lengthAdjust="spacingAndGlyphs" >%var1%</text>
<text x="666.85" y="449.40" font-family="Liberation Mono, monospace" font-size="18.60" fill="#f9cfcf" textLength="27.80" lengthAdjust="spacingAndGlyphs" font-weight="bold" >==</text>
<text x="694.65" y="449.40" font-family="Liberation Mono, monospace" font-size="18.60" fill="#e0e0e0" textLength="13.90" lengthAdjust="spacingAndGlyphs" >1</text>
<text x="722.45" y="449.40" font-family="Liberation Mono, monospace" font-size="18.60" fill="#dcdff6" textLength="13.90" lengthAdjust="spacingAndGlyphs" >(</text>
<text x="597.35" y="478.40" font-family="Liberation Mono, monospace" font-size="18.60" fill="#d5d6f2" textLength="55.60" lengthAdjust="spacingAndGlyphs" font-weight="bold" >exit</text>
<text x="666.85" y="478.40" font-family="Liberation Mono, monospace" font-size="18.60" fill="#e0e0e0" textLength="27.80" lengthAdjust="spacingAndGlyphs" >/b</text>
<text x="541.75" y="507.40" font-family="Liberation Mono, monospace" font-size="18.60" fill="#dcdff6" textLength="13.90" lengthAdjust="spacingAndGlyphs" >)</text>
<text x="569.55" y="507.40" font-family="Liberation Mono, monospace" font-size="18.60" fill="#d5d6f2" textLength="55.60" lengthAdjust="spacingAndGlyphs" font-weight="bold" >else</text>
<text x="639.05" y="507.40" font-family="Liberation Mono, monospace" font-size="18.60" fill="#dcdff6" textLength="13.90" lengthAdjust="spacingAndGlyphs" >(</text>
<text x="597.35" y="536.40" font-family="Liberation Mono, monospace" font-size="18.60" fill="#d5d6f2" textLength="55.60" lengthAdjust="spacingAndGlyphs" font-weight="bold" >exit</text>
<text x="666.85" y="536.40" font-family="Liberation Mono, monospace" font-size="18.60" fill="#e0e0e0" textLength="27.80" lengthAdjust="spacingAndGlyphs" >/b</text>
<text x="541.75" y="565.40" font-family="Liberation Mono, monospace" font-size="18.60" fill="#dcdff6" textLength="13.90" lengthAdjust="spacingAndGlyphs" >)</text>
<g transform="translate(432.25,129.50)">
<rect x="37" y="490" width="532" height="25" fill="#f9f9fa"/>
<line x1="267.5" y1="492" x2="267.5" y2="514" stroke="#f0f0f1"/>
<line x1="383.5" y1="492" x2="383.5" y2="514" stroke="#f0f0f1"/>
<line x1="508.0" y1="492" x2="508.0" y2="514" stroke="#f0f0f1"/>
<line x1="548.0" y1="492" x2="548.0" y2="514" stroke="#f0f0f1"/>
<text x="40.00" y="508.70" font-family="Liberation Sans, sans-serif" font-size="12.60" fill="#dadbdc" textLength="29.00" lengthAdjust="spacingAndGlyphs" >Ln : 7</text>
<text x="82.50" y="508.70" font-family="Liberation Sans, sans-serif" font-size="12.60" fill="#dadbdc" textLength="35.00" lengthAdjust="spacingAndGlyphs" >Col : 2</text>
<text x="130.70" y="508.70" font-family="Liberation Sans, sans-serif" font-size="12.60" fill="#dadbdc" textLength="48.00" lengthAdjust="spacingAndGlyphs" >Sel : 0 | 0</text>
<text x="273.00" y="508.70" font-family="Liberation Sans, sans-serif" font-size="12.60" fill="#dadbdc" textLength="79.00" lengthAdjust="spacingAndGlyphs" >Dos\Windows</text>
<text x="391.25" y="508.70" font-family="Liberation Sans, sans-serif" font-size="12.60" fill="#dadbdc" textLength="82.00" lengthAdjust="spacingAndGlyphs" >Windows-1251</text>
<text x="519.50" y="508.70" font-family="Liberation Sans, sans-serif" font-size="12.60" fill="#dedfe0" textLength="19.00" lengthAdjust="spacingAndGlyphs" >INS</text>
</g>
</g>
<rect x="541" y="458" width="186" height="29" fill="#ffffff"/>
<rect x="541" y="516" width="186" height="29" fill="#ffffff"/>
<rect x="694.5" y="459.5" width="26" height="26" fill="#8cf0f7"/>
<rect x="694.5" y="517.5" width="26" height="26.3" fill="#8cf0f7"/>
<text x="597.35" y="479.00" font-family="Liberation Mono, monospace" font-size="18.60" fill="#1616b4" textLength="55.60" lengthAdjust="spacingAndGlyphs" font-weight="bold" >exit</text>
<text x="666.85" y="479.00" font-family="Liberation Mono, monospace" font-size="18.60" fill="#333333" textLength="27.80" lengthAdjust="spacingAndGlyphs" >/b</text>
<text x="709.75" y="479.00" font-family="Liberation Mono, monospace" font-size="18.60" fill="#2b3b40" textLength="11.40" lengthAdjust="spacingAndGlyphs" >1</text>
<text x="597.35" y="537.00" font-family="Liberation Mono, monospace" font-size="18.60" fill="#1616b4" textLength="55.60" lengthAdjust="spacingAndGlyphs" font-weight="bold" >exit</text>
<text x="666.85" y="537.00" font-family="Liberation Mono, monospace" font-size="18.60" fill="#333333" textLength="27.80" lengthAdjust="spacingAndGlyphs" >/b</text>
<text x="709.75" y="537.00" font-family="Liberation Mono, monospace" font-size="18.60" fill="#2b3b40" textLength="11.40" lengthAdjust="spacingAndGlyphs" >2</text>
<line x1="554.8" y1="545" x2="554.8" y2="572.5" stroke="#c9c9c9" stroke-width="1"/>
<rect x="725.5" y="446.8" width="265.8" height="58.2" fill="#dbeef4" fill-opacity="0.8"/>
<rect x="724.5" y="517" width="102.3" height="57.8" fill="#dbeef4" fill-opacity="0.8"/>
<text x="735.50" y="471.00" font-family="Liberation Sans, sans-serif" font-size="17.30" fill="#dc0000" textLength="237.00" lengthAdjust="spacingAndGlyphs" font-weight="bold" >- Выход с кодом 1 (уровень</text>
<text x="735.50" y="494.90" font-family="Liberation Sans, sans-serif" font-size="17.30" fill="#dc0000" textLength="75.00" lengthAdjust="spacingAndGlyphs" font-weight="bold" >ошибки)</text>
<text x="733.50" y="541.20" font-family="Liberation Sans, sans-serif" font-size="17.30" fill="#dc0000" textLength="81.00" lengthAdjust="spacingAndGlyphs" font-weight="bold" >- Выход с</text>
<text x="734.00" y="564.60" font-family="Liberation Sans, sans-serif" font-size="17.30" fill="#dc0000" textLength="71.00" lengthAdjust="spacingAndGlyphs" font-weight="bold" >кодом 2</text>
<path d="M0 767 L1.9 767 L9.4 758.4 L18.75 749.9 L28.1 743.4 L37.5 738.2 L46.9 734.5 L56.25 731.7 L65.6 729.8 L75 728.7 L84 728.4 H940 L949 728.7 L958.4 729.8 L967.75 731.7 L977.1 734.5 L986.5 738.2 L995.9 743.4 L1005.25 749.9 L1014.6 758.4 L1022.1 767 Z" fill="#04707a"/>
<text x="69.70" y="752.60" font-family="Liberation Sans, sans-serif" font-size="10.60" fill="#ffffff" textLength="132.00" lengthAdjust="spacingAndGlyphs" font-weight="bold" >мы делаем мир разумнее!</text>
<text x="927.20" y="752.80" font-family="Liberation Sans, sans-serif" font-size="17.80" fill="#ffffff" textLength="19.40" lengthAdjust="spacingAndGlyphs" font-weight="bold" >33</text>
</svg>
</body></html>
